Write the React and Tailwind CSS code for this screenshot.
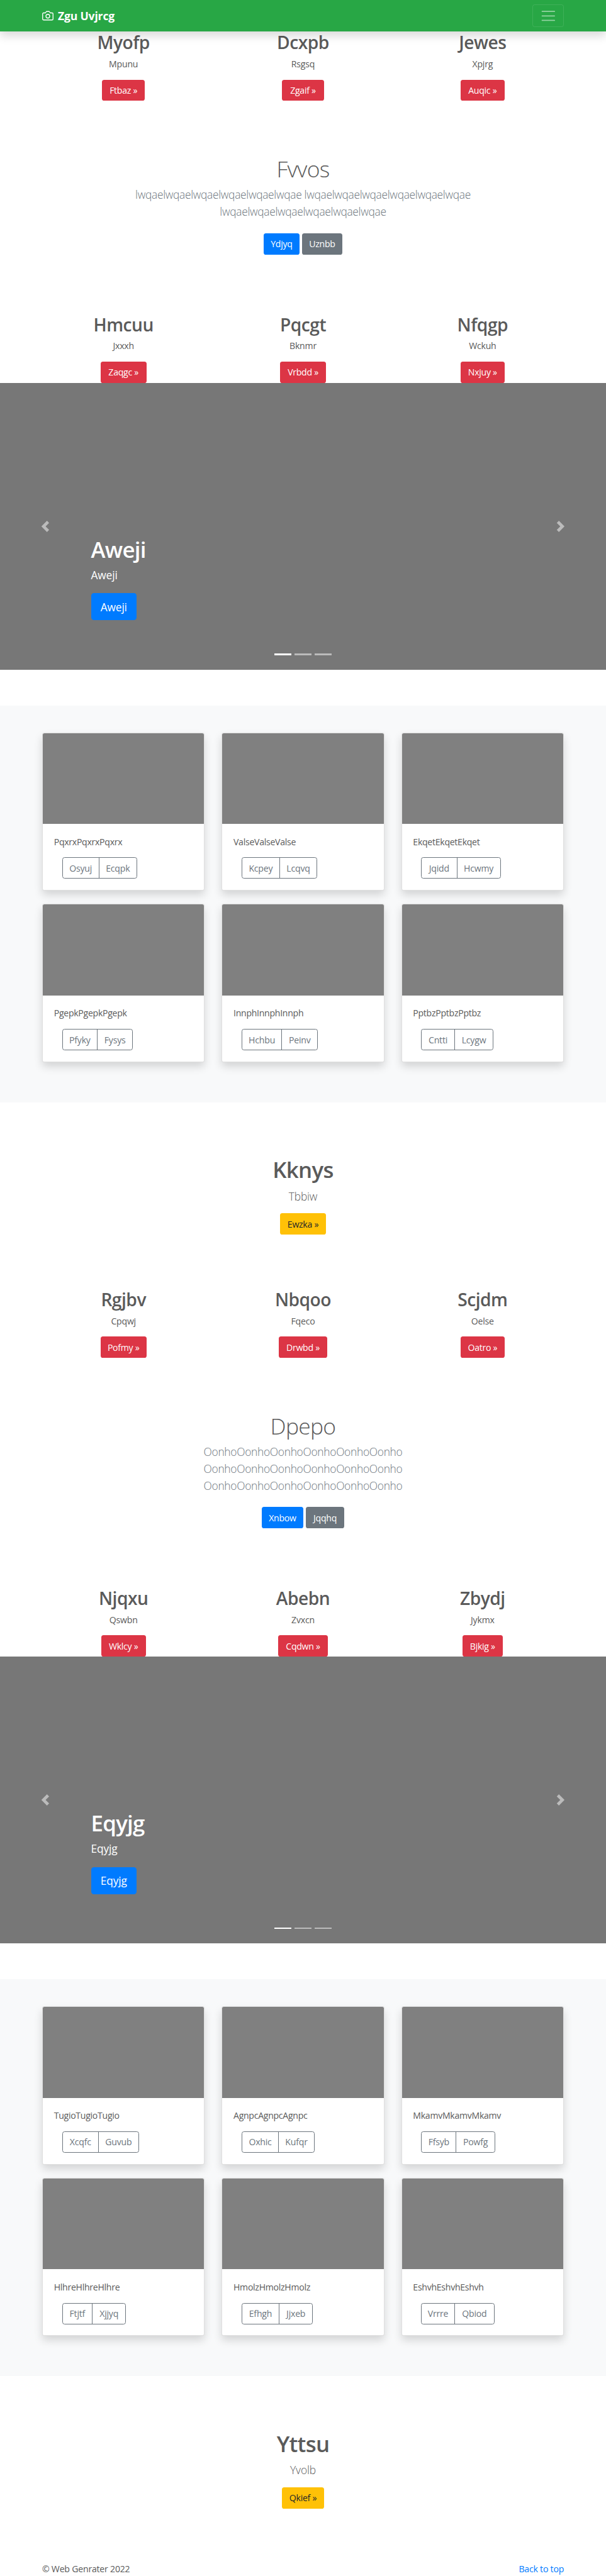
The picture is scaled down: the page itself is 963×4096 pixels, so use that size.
const cx = (...parts) => parts.filter(Boolean).join(" ");

function Button({ className, children }) {
  return (
    <a className={cx("inline-flex h-[33.9px] shrink-0 items-center justify-center rounded-[3.6px] text-[14.1px] tracking-[-0.02em] whitespace-nowrap", className)}>
      {children}
    </a>
  );
}

function Navbar() {
  return (
    <nav className="relative z-10 flex h-[50px] items-center justify-between bg-[#28a745] px-[66.9px] shadow-[0_7px_14px_rgba(0,0,0,0.15)]">
      <a className="flex items-center gap-[7px] text-white">
        <svg className="size-[18px]" viewBox="0 0 24 24" fill="none" stroke="currentColor" strokeWidth="1.8" strokeLinecap="round" strokeLinejoin="round">
          <path d="M23 19a2 2 0 0 1-2 2H3a2 2 0 0 1-2-2V8a2 2 0 0 1 2-2h4l2-3h6l2 3h4a2 2 0 0 1 2 2z" />
          <circle cx="12" cy="13" r="4" />
        </svg>
        <span className="pt-px text-[17.6px] font-bold tracking-[-0.01em]">Zgu Uvjrcg</span>
      </a>
      <span className="flex h-[35.6px] w-[50px] items-center justify-center rounded-[3.6px] border border-white/10">
        <svg className="size-[26.7px]" viewBox="0 0 30 30" fill="none" stroke="rgba(255,255,255,0.5)" strokeWidth="2" strokeLinecap="round">
          <path d="M4 7h22M4 15h22M4 23h22" />
        </svg>
      </span>
    </nav>
  );
}

function Columns({ items }) {
  return (
    <div className="grid h-[110.9px] grid-cols-3 px-[53.5px] text-center">
      {items.map(([title, text, action, width]) => (
        <div key={title} className="flex flex-col items-center">
          <h2 className="mt-[0.8px] text-[28.2px] leading-[34.2px] font-semibold tracking-[-0.018em]">{title}</h2>
          <p className="mt-[6.3px] text-[14.1px] leading-[21.4px] tracking-[-0.015em]">{text}</p>
          <Button className={cx("mt-[14.3px] bg-[#dc3545] text-white", width)}>{action} »</Button>
        </div>
      ))}
    </div>
  );
}

function Hero({ title, lines, actions, widths }) {
  return (
    <section className="mt-[85.6px] flex flex-col items-center text-center">
      <h1 className="mt-[0.9px] text-[35.4px] leading-[42.8px] font-light tracking-[-0.02em]">{title}</h1>
      <p className="mt-[6.7px] text-[17.4px] leading-[26.74px] font-light tracking-[-0.018em] text-[#6c757d]">
        {lines.map((line, i) => (
          <span key={i} className="block">{line}</span>
        ))}
      </p>
      <div className="mt-[20.9px] flex gap-[3.8px]">
        <Button className={cx("bg-[#007bff] text-white", widths[0])}>{actions[0]}</Button>
        <Button className={cx("bg-[#6c757d] text-white", widths[1])}>{actions[1]}</Button>
      </div>
    </section>
  );
}

function Carousel({ label }) {
  return (
    <section className="relative h-[456.3px] bg-[#777]">
      <div className="flex flex-col items-start pt-[243.9px] pl-[144.5px] text-white">
        <h1 className="text-[34.8px] leading-[42.8px] font-semibold tracking-[-0.02em]">{label}</h1>
        <p className="mt-[6.5px] text-[17.4px] leading-[25px] tracking-[-0.01em]">{label}</p>
        <a className="mt-[16.6px] flex h-[42.8px] w-[72.5px] items-center justify-center rounded-[4.3px] bg-[#007bff] text-[17.4px] tracking-[-0.01em]">{label}</a>
      </div>
      <svg className="absolute top-1/2 left-[63.3px] size-[17.8px] -translate-y-1/2" viewBox="0 0 8 8" fill="#fff" fillOpacity="0.5">
        <path d="M5.25 0l-4 4 4 4 1.5-1.5L4.25 4l2.5-2.5L5.25 0z" />
      </svg>
      <svg className="absolute top-1/2 right-[63.3px] size-[17.8px] -translate-y-1/2" viewBox="0 0 8 8" fill="#fff" fillOpacity="0.5">
        <path d="M2.75 0l-1.5 1.5L3.75 4l-2.5 2.5L2.75 8l4-4-4-4z" />
      </svg>
      <div className="absolute inset-x-0 bottom-[23.2px] flex justify-center gap-[5.35px]">
        <span className="h-[2.7px] w-[26.75px] bg-white" />
        <span className="h-[2.7px] w-[26.75px] bg-white/50" />
        <span className="h-[2.7px] w-[26.75px] bg-white/50" />
      </div>
    </section>
  );
}

function Card({ text, left, right, leftWidth, rightWidth }) {
  return (
    <article className="flex h-[251.3px] flex-col rounded-[3.6px] border border-black/[0.125] bg-white shadow-[0_7px_14px_rgba(0,0,0,0.15)]">
      <div className="h-[144.4px] shrink-0 rounded-t-[2.6px] bg-[#808080]" />
      <div className="flex flex-col items-start px-[17.8px] pt-[17.6px]">
        <p className="text-[14.1px] leading-[21.4px] tracking-[-0.02em]">{text}</p>
        <div className="mt-[14.3px] ml-[12.9px] flex h-[33.9px] rounded-[3.6px] border border-[#6c757d] text-[14.1px] tracking-[-0.015em] text-[#6c757d]">
          <span className={cx("flex items-center justify-center border-r border-[#6c757d]", leftWidth)}>{left}</span>
          <span className={cx("flex items-center justify-center", rightWidth)}>{right}</span>
        </div>
      </div>
    </article>
  );
}

function Album({ cards }) {
  return (
    <section className="mt-[57px] h-[631px] bg-[#f8f9fa] px-[66.9px] pt-[42.8px]">
      <div className="grid grid-cols-3 gap-x-[26.75px] gap-y-[21.4px]">
        {cards.map(([text, left, right, leftWidth, rightWidth]) => (
          <Card key={text} text={text} left={left} right={right} leftWidth={leftWidth} rightWidth={rightWidth} />
        ))}
      </div>
    </section>
  );
}

function Feature({ title, text, action, width }) {
  return (
    <section className="mt-[86.2px] flex flex-col items-center text-center">
      <h1 className="text-[34.8px] leading-[42.8px] font-semibold tracking-[-0.02em]">{title}</h1>
      <p className="mt-[6.6px] text-[17.4px] leading-[26.7px] font-light tracking-[-0.01em]">{text}</p>
      <Button className={cx("mt-[13.9px] bg-[#ffc107] text-[#212529]", width)}>{action} »</Button>
    </section>
  );
}

export default function App() {
  return (
    <div className="h-[4096px] w-[963px] overflow-hidden bg-white font-['Open_Sans','Noto_Sans',sans-serif] text-[#5a5a5a]">
      <Navbar />
      <div className="-mt-[0.5px]">
        <Columns
          items={[
            ["Myofp", "Mpunu", "Ftbaz", "w-[68.2px]"],
            ["Dcxpb", "Rsgsq", "Zgaif", "w-[66.3px]"],
            ["Jewes", "Xpjrg", "Auqic", "w-[69.4px]"],
          ]}
        />
      </div>
      <Hero
        title="Fvvos"
        lines={["lwqaelwqaelwqaelwqaelwqaelwqae lwqaelwqaelwqaelwqaelwqaelwqae", "lwqaelwqaelwqaelwqaelwqaelwqae"]}
        actions={["Ydjyq", "Uznbb"]}
        widths={["w-[57.2px]", "w-[64.4px]"]}
      />
      <div className="mt-[93.2px]">
        <Columns
          items={[
            ["Hmcuu", "Jxxxh", "Zaqgc", "w-[73.1px]"],
            ["Pqcgt", "Bknmr", "Vrbdd", "w-[73.6px]"],
            ["Nfqgp", "Wckuh", "Nxjuy", "w-[69.4px]"],
          ]}
        />
      </div>
      <Carousel label="Aweji" />
      <Album
        cards={[
          ["PqxrxPqxrxPqxrx", "Osyuj", "Ecqpk", "w-[58.2px]", "w-[59px]"],
          ["ValseValseValse", "Kcpey", "Lcqvq", "w-[59.9px]", "w-[58.4px]"],
          ["EkqetEkqetEkqet", "Jqidd", "Hcwmy", "w-[56.3px]", "w-[68.2px]"],
          ["PgepkPgepkPgepk", "Pfyky", "Fysys", "w-[55.6px]", "w-[55px]"],
          ["InnphInnphInnph", "Hchbu", "Peinv", "w-[63.4px]", "w-[55.9px]"],
          ["PptbzPptbzPptbz", "Cntti", "Lcygw", "w-[52.7px]", "w-[60.2px]"],
        ]}
      />
      <Feature title="Kknys" text="Tbbiw" action="Ewzka" width="w-[73.7px]" />
      <div className="mt-[85.2px]">
        <Columns
          items={[
            ["Rgjbv", "Cpqwj", "Pofmy", "w-[73.1px]"],
            ["Nbqoo", "Fqeco", "Drwbd", "w-[76.1px]"],
            ["Scjdm", "Oelse", "Oatro", "w-[70px]"],
          ]}
        />
      </div>
      <Hero
        title="Dpepo"
        lines={["OonhoOonhoOonhoOonhoOonhoOonho", "OonhoOonhoOonhoOonhoOonhoOonho", "OonhoOonhoOonhoOonhoOonhoOonho"]}
        actions={["Xnbow", "Jqqhq"]}
        widths={["w-[66.3px]", "w-[61.4px]"]}
      />
      <div className="mt-[93.2px]">
        <Columns
          items={[
            ["Njqxu", "Qswbn", "Wklcy", "w-[71.3px]"],
            ["Abebn", "Zvxcn", "Cqdwn", "w-[78.6px]"],
            ["Zbydj", "Jykmx", "Bjkig", "w-[64.5px]"],
          ]}
        />
      </div>
      <Carousel label="Eqyjg" />
      <Album
        cards={[
          ["TugioTugioTugio", "Xcqfc", "Guvub", "w-[57.4px]", "w-[62.7px]"],
          ["AgnpcAgnpcAgnpc", "Oxhic", "Kufqr", "w-[58.3px]", "w-[55.7px]"],
          ["MkamvMkamvMkamv", "Ffsyb", "Powfg", "w-[55.2px]", "w-[60.5px]"],
          ["HlhreHlhreHlhre", "Ftjtf", "Xjjyq", "w-[47.5px]", "w-[52.2px]"],
          ["HmolzHmolzHmolz", "Efhgh", "Jjxeb", "w-[59.2px]", "w-[52.2px]"],
          ["EshvhEshvhEshvh", "Vrrre", "Qbiod", "w-[52.7px]", "w-[61.9px]"],
        ]}
      />
      <Feature title="Yttsu" text="Yvolb" action="Qkief" width="w-[67.8px]" />
      <footer className="mt-[85.2px] flex justify-between px-[66.9px] text-[14.1px] leading-[21.4px] tracking-[-0.015em]">
        <p>© Web Genrater 2022</p>
        <a className="text-[#007bff]">Back to top</a>
      </footer>
    </div>
  );
}
